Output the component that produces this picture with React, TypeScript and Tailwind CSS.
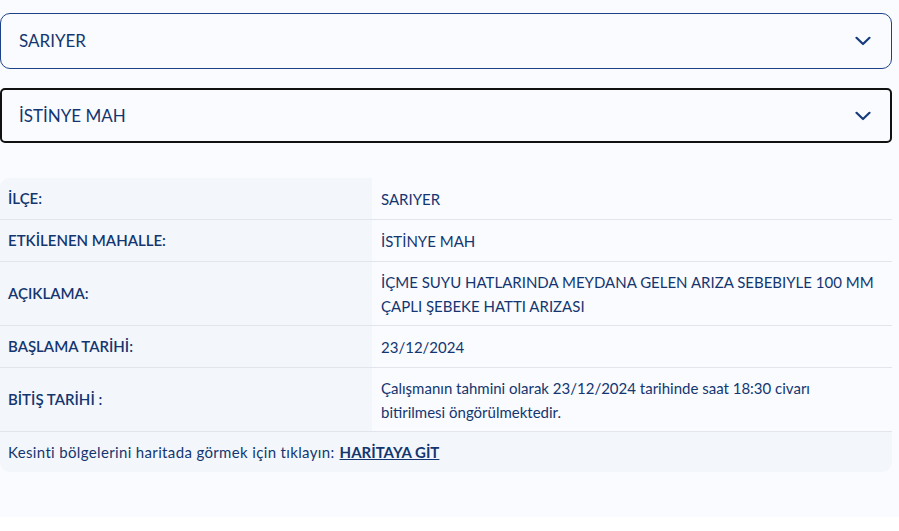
import React from "react";

const font = { fontFamily: "Lato, 'Noto Sans', sans-serif" };

function Chevron() {
  return (
    <svg width="16" height="10" viewBox="0 0 16 10" fill="none">
      <path d="M1.5 1.8 L8 8 L14.5 1.8" stroke="#163c7c" strokeWidth="2.2" strokeLinecap="round" strokeLinejoin="round" />
    </svg>
  );
}

const rows: { label: string; value: React.ReactNode; tall?: boolean }[] = [
  { label: "İLÇE:", value: "SARIYER" },
  { label: "ETKİLENEN MAHALLE:", value: "İSTİNYE MAH" },
  {
    label: "AÇIKLAMA:",
    value: "İÇME SUYU HATLARINDA MEYDANA GELEN ARIZA SEBEBIYLE 100 MM ÇAPLI ŞEBEKE HATTI ARIZASI",
    tall: true,
  },
  { label: "BAŞLAMA TARİHİ:", value: "23/12/2024" },
  {
    label: "BİTİŞ TARİHİ :",
    value: (
      <span>
        Çalışmanın tahmini olarak 23/12/2024 tarihinde saat 18:30 civarı
        <br />
        bitirilmesi öngörülmektedir.
      </span>
    ),
    tall: true,
  },
];

export default function App() {
  return (
    <div style={font} className="w-full h-[517px] bg-[#f9fbfe] pr-[7px] pt-[13px] text-[#143670]">
      <div className="h-[56px] border border-[#1d4289] rounded-[10px] flex items-center justify-between pl-[18px] pr-[20px] text-[17px]">
        <span>SARIYER</span>
        <Chevron />
      </div>
      <div className="mt-[19px] h-[55px] border-2 border-[#111] rounded-[5px] flex items-center justify-between pl-[17px] pr-[19px] text-[17px]">
        <span>İSTİNYE MAH</span>
        <Chevron />
      </div>
      <div className="mt-[35px] rounded-[10px] overflow-hidden bg-[#f3f6fb] text-[15px]">
        {rows.map((r) => (
          <div key={r.label} className={`flex border-b border-[#e2e6ec] ${r.tall ? "h-[64px]" : "h-[42px]"}`}>
            <div className="w-[372px] shrink-0 pl-[8px] flex items-center font-semibold bg-[#f3f6fb]">{r.label}</div>
            <div className="flex-1 pl-[9px] pr-[14px] flex items-center bg-[#f9fbfe] leading-[24px]">{r.value}</div>
          </div>
        ))}
        <div className="h-[40px] pl-[8px] flex items-center">
          <span className="tracking-[0.35px]">Kesinti bölgelerini haritada görmek için tıklayın:</span>
          <a className="ml-[5px] font-bold underline">HARİTAYA GİT</a>
        </div>
      </div>
    </div>
  );
}
